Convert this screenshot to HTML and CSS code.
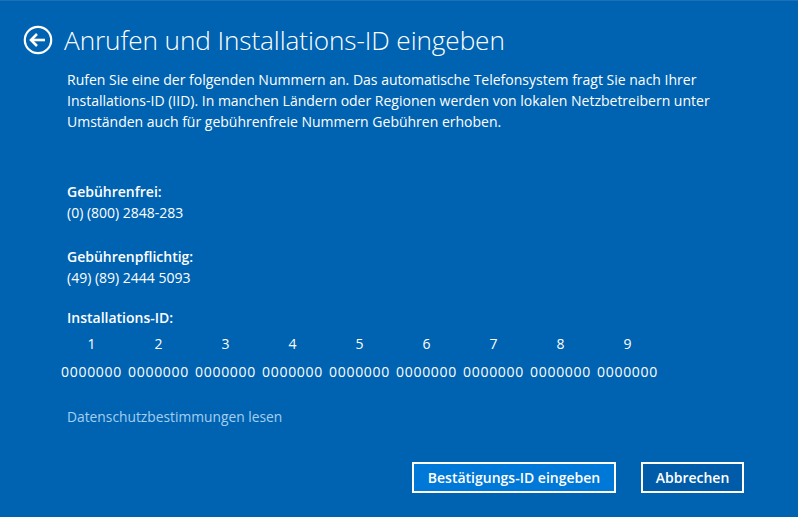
FILE: index.html
```html
<!DOCTYPE html>
<html lang="de">
<head>
<meta charset="utf-8">
<link rel="stylesheet" href="styles.css">
</head>
<body>
<div class="page">
  <header class="header">
    <svg class="back" width="30" height="30" viewBox="0 0 30 30" aria-hidden="true">
      <circle cx="15" cy="15" r="13.2" fill="none" stroke="#fff" stroke-width="2.2"/>
      <path d="M8 15 H22" stroke="#fff" stroke-width="2.6" fill="none"/>
      <path d="M14 9 L8 15 L14 21" stroke="#fff" stroke-width="2.6" fill="none" stroke-linejoin="miter"/>
    </svg>
    <h1 class="title">Anrufen und Installations-ID eingeben</h1>
  </header>
  <main class="content">
    <p class="intro">Rufen Sie eine der folgenden Nummern an. Das automatische Telefonsystem fragt Sie nach Ihrer Installations-ID (IID). In manchen Ländern oder Regionen werden von lokalen Netzbetreibern unter Umständen auch für gebührenfreie Nummern Gebühren erhoben.</p>
    <section class="block first">
      <div class="label">Gebührenfrei:</div>
      <div class="value">(0) (800) 2848-283</div>
    </section>
    <section class="block">
      <div class="label">Gebührenpflichtig:</div>
      <div class="value">(49) (89) 2444 5093</div>
    </section>
    <section class="block ids">
      <div class="label">Installations-ID:</div>
      <div class="idgrid">
        <span class="num">1</span><span class="num">2</span><span class="num">3</span><span class="num">4</span><span class="num">5</span><span class="num">6</span><span class="num">7</span><span class="num">8</span><span class="num">9</span>
        <span class="grp">0000000</span><span class="grp">0000000</span><span class="grp">0000000</span><span class="grp">0000000</span><span class="grp">0000000</span><span class="grp">0000000</span><span class="grp">0000000</span><span class="grp">0000000</span><span class="grp">0000000</span>
      </div>
    </section>
    <a class="link" href="#">Datenschutzbestimmungen lesen</a>
  </main>
  <footer class="actions">
    <button class="btn primary">Bestätigungs-ID eingeben</button>
    <button class="btn">Abbrechen</button>
  </footer>
</div>
</body>
</html>
```

FILE: styles.css
```css
html, body {
  margin: 0;
  padding: 0;
  height: 100%;
}
body {
  background: #0063b1;
  color: #fff;
  font-family: "Open Sans", "Noto Sans", "Liberation Sans", sans-serif;
  overflow: hidden;
}
.page {
  height: 517px;
  display: flex;
  flex-direction: column;
  border-top: 1px solid #1d70b5;
  box-sizing: border-box;
}
.header {
  display: flex;
  align-items: center;
  gap: 11px;
  padding: 23px 0 0 23px;
  height: 32px;
}
.back {
  flex: none;
}
.title {
  margin: 0;
  font-weight: 300;
  font-size: 26.2px;
  line-height: 32px;
  letter-spacing: -0.1px;
}
.content {
  padding-left: 67px;
  flex: 1;
}
.intro {
  margin: 13px 0 0;
  font-size: 14px;
  line-height: 21px;
  width: 700px;
}
.block {
  font-size: 14px;
  line-height: 21px;
}
.block.first {
  margin-top: 49px;
}
.block + .block {
  margin-top: 23px;
}
.block.ids {
  margin-top: 19px;
}
.label {
  font-weight: 600;
}
.idgrid {
  display: grid;
  grid-template-columns: repeat(9, 67px);
  margin-left: -9px;
  margin-top: 5px;
  row-gap: 7px;
  text-align: center;
}
.num, .grp {
  font-size: 14px;
  line-height: 21px;
}
.grp {
  letter-spacing: 0.7px;
}
.link {
  display: inline-block;
  margin-top: 24px;
  color: #a4cff2;
  text-decoration: none;
  font-size: 13.8px;
  line-height: 21px;
}
.actions {
  display: flex;
  justify-content: flex-end;
  gap: 25px;
  padding: 0 54px 24px 0;
}
.btn {
  height: 31px;
  box-sizing: border-box;
  border: 2px solid #fff;
  color: #fff;
  font-family: inherit;
  font-weight: 600;
  font-size: 14px;
  padding: 0 10px;
  background: #005ca8;
}
.btn.primary {
  width: 204px;
  background: #0078d7;
}
.btn:not(.primary) {
  width: 103px;
}
```
